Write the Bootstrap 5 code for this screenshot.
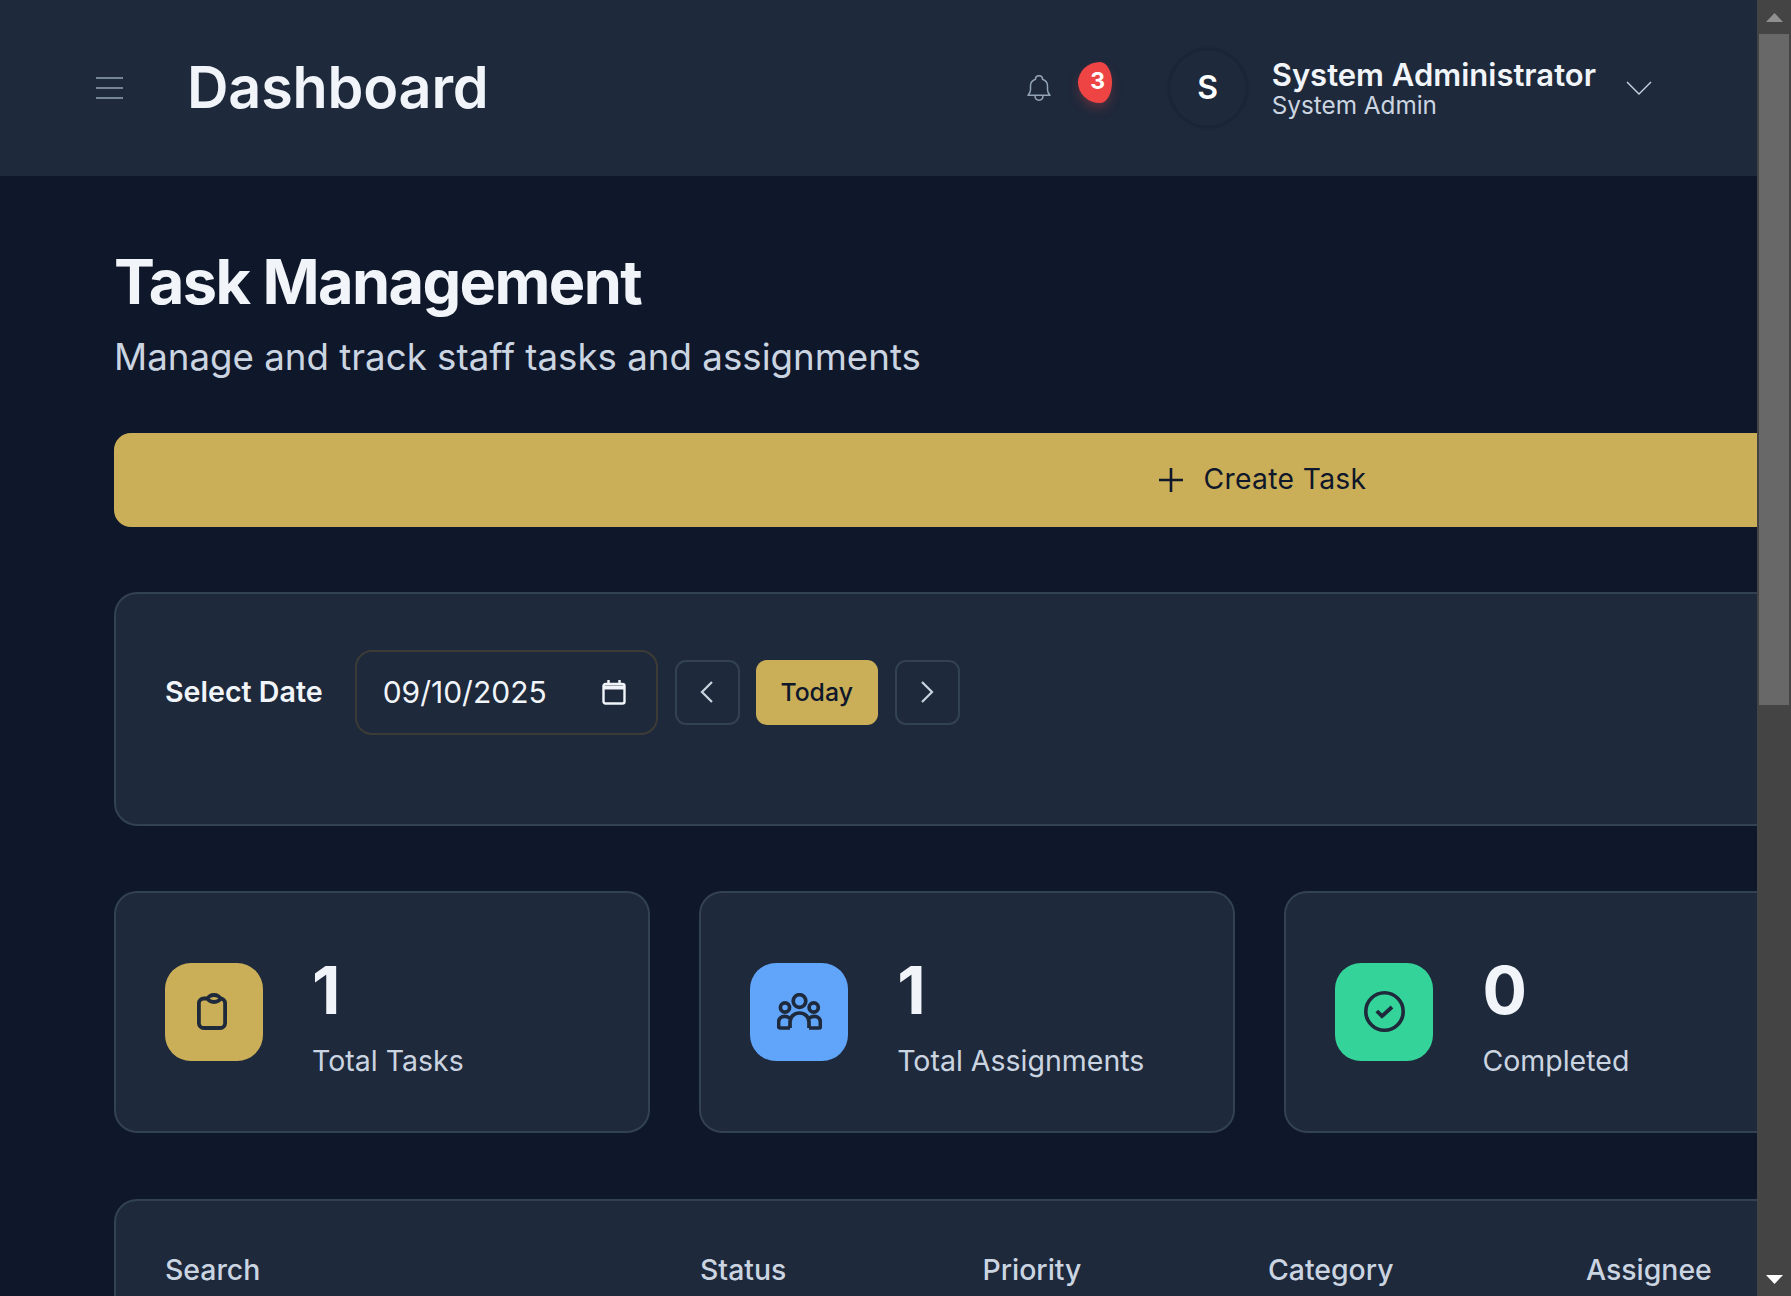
<!DOCTYPE html>
<html lang="en">
<head>
  <meta charset="UTF-8">
  <meta name="viewport" content="width=device-width, initial-scale=1.0">
  <title>Task Management</title>
  <link href="https://cdn.jsdelivr.net/npm/bootstrap@5.3.3/dist/css/bootstrap.min.css" rel="stylesheet">
  <style>
    html, body { height: 100%; overflow: hidden; }
    body { font-family: "Inter", "Liberation Sans", sans-serif; background: #0f172a; color: #f1f5f9; }
    .app-shell { height: 1296px; }
    .app-view { min-width: 0; overflow: hidden; }
    .top-bar { height: 176px; padding: 0 105px 0 96px; background: #1e293b; }
    .top-title { font-size: 57.500px; font-weight: 600; line-height: 1; color: #f1f5f9; margin: 0 0 0 64px; letter-spacing: -.2px; }
    .bell-box { width: 85px; height: 41px; margin-left: auto; margin-bottom: 12px; }
    .bell-svg { position: absolute; left: 0; top: 13px; }
    .bell-badge { position: absolute; left: 51px; top: 0; width: 34px; height: 41px; background: #ef4444; border-radius: 65% 35% 35% 65% / 50%; color: #fff; font-size: 23px; font-weight: 700; box-shadow: 0 6px 12px -2px rgba(239,68,68,.35); padding-left: 6px; padding-bottom: 2px; }
    .user-avatar { width: 78px; height: 78px; margin-left: 57px; background: #1e293b; box-shadow: 0 0 3px rgba(15,23,42,.55), inset 0 0 2px rgba(15,23,42,.4); font-size: 32px; font-weight: 600; color: #fff; flex: none; }
    .user-text { margin-left: 25px; margin-bottom: 1px; }
    .user-name { font-size: 31px; font-weight: 600; line-height: 35px; color: #f1f5f9; }
    .user-role { font-size: 24.300px; line-height: 27px; color: #cbd5e1; }
    .user-caret { margin-left: 30px; }
    .page-body { width: 2522px; padding: 70px 114px 0; }
    .page-title { font-size: 61.300px; font-weight: 700; line-height: 1.2; letter-spacing: -1.6px; color: #f1f5f9; margin: 0; }
    .page-sub { font-size: 36.700px; line-height: 1.2; color: #cbd5e1; margin: 15px 0 0; }
    .btn-create { height: 94px; margin-top: 54px; padding-left: 14px; padding-right: 12px; background: #cbaf58; border: 0; border-radius: 17px; color: #0f172a; font-size: 28.300px; font-weight: 400; letter-spacing: .3px; }
    .btn-create:hover { background: #cbaf58; color: #0f172a; }
    .panel-card { background: #1e293b; border: 2px solid #334155; border-radius: 23px; }
    .date-card { height: 234px; margin-top: 65px; padding: 56px 49px; }
    .date-label { font-size: 28.600px; font-weight: 600; color: #f1f5f9; margin-right: 32px; }
    .date-field { width: 303px; height: 85px; padding: 0 30px 0 26px; border: 2px solid #3c3b36; border-radius: 17px; background: transparent; font-size: 30px; color: #f1f5f9; margin-right: 17px; }
    .btn-step { width: 65px; height: 65px; padding: 0; border: 2px solid #334155; border-radius: 11px; background: transparent; }
    .btn-today { width: 122px; height: 65px; padding: 1px 0 0; margin: 0 17px 0 16px; border: 0; border-radius: 11px; background: #cbaf58; color: #0f172a; font-size: 24.800px; font-weight: 500; }
    .stat-grid { display: grid; grid-template-columns: repeat(4, 536.200px); gap: 49px; margin-top: 65px; }
    .stat-card { height: 242px; padding: 0 49px; flex-direction: row; align-items: center; }
    .stat-icon { width: 98px; height: 98px; border-radius: 26px; flex: none; margin-right: 49px; }
    .stat-text { padding-top: 6px; }
    .stat-num { font-size: 66px; font-weight: 700; line-height: 1.2; color: #f1f5f9; }
    .stat-label { font-size: 28.500px; line-height: 1.2; color: #cbd5e1; margin-top: 14px; }
    .bg-gold { background: #cbaf58; }
    .bg-sky { background: #60a5fa; }
    .bg-mint { background: #34d399; }
    .clip-svg { margin-right: 4px; }
    .filter-card { height: 300px; margin-top: 66px; padding: 52px 49px; }
    .filter-label { font-size: 28.400px; font-weight: 500; line-height: 1.2; color: #cbd5e1; }
    .filter-search { width: 535px; }
    .filter-status { width: 282.500px; }
    .filter-priority { width: 285.500px; }
    .filter-category { width: 318px; }
    .fake-scroll { width: 34px; background: #444; flex: none; }
    .scroll-btn { height: 34px; }
    .scroll-thumb { height: 671px; margin-left: 2px; width: 30px; background: #686868; }
  </style>
</head>
<body>
  <div class="app-shell d-flex">
    <div class="app-view flex-grow-1">

      <!-- Top bar -->
      <header class="top-bar d-flex align-items-center">
        <svg width="27" height="22" viewBox="0 0 27 22" fill="none" stroke="#94a3b8" stroke-width="1.5">
          <path d="M0 1h27M0 11h27M0 21h27"/>
        </svg>
        <h1 class="top-title">Dashboard</h1>

        <div class="bell-box position-relative">
          <svg class="bell-svg" width="24" height="26" viewBox="0 0 24 26" fill="none" stroke="#94a3b8" stroke-width="1.5" stroke-linejoin="round">
            <path d="M1 20.200h22c-1.500-1.500-2.500-3-2.500-5.500v-4c0-3-2-5.500-5-6.500 0-2-1-3.500-3.500-3.500S8.500 2.200 8.500 4.200c-3 1-5 3.500-5 6.500v4c0 2.500-1 4-2.500 5.500z"/>
            <path d="M8 20.500c0 3 1.800 4.700 4 4.700s4-1.700 4-4.700"/>
          </svg>
          <span class="bell-badge d-flex align-items-center justify-content-center">3</span>
        </div>

        <div class="user-avatar rounded-circle d-flex align-items-center justify-content-center">S</div>
        <div class="user-text">
          <div class="user-name">System Administrator</div>
          <div class="user-role">System Admin</div>
        </div>
        <svg class="user-caret" width="26" height="14" viewBox="0 0 26 14" fill="none" stroke="#cbd5e1" stroke-width="1.4">
          <path d="M1 1l12 12L25 1"/>
        </svg>
      </header>

      <main class="page-body">
        <h2 class="page-title">Task Management</h2>
        <p class="page-sub">Manage and track staff tasks and assignments</p>

        <button type="button" class="btn btn-create w-100 d-flex align-items-center justify-content-center gap-3">
          <svg width="26" height="26" viewBox="0 0 26 26" fill="none" stroke="#0f172a" stroke-width="2.600">
            <path d="M13 1v24M1 13h24"/>
          </svg>
          <span class="ms-1">Create Task</span>
        </button>

        <!-- Date picker -->
        <div class="card panel-card date-card">
          <div class="d-flex align-items-center">
            <span class="date-label">Select Date</span>
            <div class="date-field d-flex align-items-center justify-content-between">
              <span>09/10/2025</span>
              <svg width="24" height="25" viewBox="0 0 24 25" fill="none" stroke="#f1f5f9" stroke-width="2.400">
                <rect x="1.500" y="4" width="21" height="19.500" rx="2"/>
                <path d="M1.500 7.500h21" stroke-width="4"/>
                <path d="M6.500 0v4M17.500 0v4"/>
              </svg>
            </div>
            <button type="button" class="btn btn-step d-flex align-items-center justify-content-center">
              <svg width="14" height="22" viewBox="0 0 14 22" fill="none" stroke="#cbd5e1" stroke-width="2.200"><path d="M12 1L2 11l10 10"/></svg>
            </button>
            <button type="button" class="btn btn-today">Today</button>
            <button type="button" class="btn btn-step d-flex align-items-center justify-content-center">
              <svg width="14" height="22" viewBox="0 0 14 22" fill="none" stroke="#cbd5e1" stroke-width="2.200"><path d="M2 1l10 10L2 21"/></svg>
            </button>
          </div>
        </div>

        <!-- Stats -->
        <div class="stat-grid">
          <div class="card panel-card stat-card">
            <div class="stat-icon bg-gold d-flex align-items-center justify-content-center">
              <svg class="clip-svg" width="30" height="37" viewBox="0 0 30 37" fill="none" stroke="#1e293b" stroke-width="3.800">
                <rect x="1.900" y="5.500" width="26.200" height="29.500" rx="5"/>
                <ellipse cx="17" cy="5.500" rx="6" ry="3.500" fill="#cbaf58"/>
              </svg>
            </div>
            <div class="stat-text">
              <div class="stat-num">1</div>
              <div class="stat-label">Total Tasks</div>
            </div>
          </div>
          <div class="card panel-card stat-card">
            <div class="stat-icon bg-sky d-flex align-items-center justify-content-center">
              <svg width="45" height="37" viewBox="0 0 45 37" fill="none" stroke="#1e293b" stroke-width="3.700">
                <circle cx="22.500" cy="8" r="6.300"/>
                <circle cx="8" cy="14.500" r="4.600"/>
                <circle cx="36.700" cy="14.500" r="4.600"/>
                <path d="M13 35v-6c0-5 4-9 9.500-9s9.500 4 9.500 9v6"/>
                <path d="M13 35H3.300c-1 0-1.700-.8-1.700-1.700v-4c0-3.500 2.500-6 6-6 2 0 3.500.6 5 1.800"/>
                <path d="M32 35h9.700c1 0 1.700-.8 1.700-1.700v-4c0-3.500-2.500-6-6-6-2 0-3.500.6-5 1.800"/>
              </svg>
            </div>
            <div class="stat-text">
              <div class="stat-num">1</div>
              <div class="stat-label">Total Assignments</div>
            </div>
          </div>
          <div class="card panel-card stat-card">
            <div class="stat-icon bg-mint d-flex align-items-center justify-content-center">
              <svg width="41" height="41" viewBox="0 0 41 41" fill="none" stroke="#1e293b" stroke-width="3.600">
                <circle cx="20.500" cy="20.500" r="18.700"/>
                <path d="M12.800 20l5.200 5.200 10-9.200" stroke-width="3.800"/>
              </svg>
            </div>
            <div class="stat-text">
              <div class="stat-num">0</div>
              <div class="stat-label">Completed</div>
            </div>
          </div>
        </div>

        <!-- Filters -->
        <div class="card panel-card filter-card">
          <div class="d-flex">
            <div class="filter-label filter-search">Search</div>
            <div class="filter-label filter-status">Status</div>
            <div class="filter-label filter-priority">Priority</div>
            <div class="filter-label filter-category">Category</div>
            <div class="filter-label">Assignee</div>
          </div>
        </div>
      </main>
    </div>

    <!-- Window scrollbar -->
    <div class="fake-scroll d-flex flex-column">
      <div class="scroll-btn d-flex align-items-center justify-content-center">
        <svg width="17" height="9" viewBox="0 0 17 9"><path d="M8.500 0L17 9H0z" fill="#8f8f8f"/></svg>
      </div>
      <div class="scroll-thumb"></div>
      <div class="scroll-btn d-flex align-items-center justify-content-center mt-auto">
        <svg width="17" height="9" viewBox="0 0 17 9"><path d="M0 0h17L8.500 9z" fill="#fff"/></svg>
      </div>
    </div>
  </div>

  <script src="https://cdn.jsdelivr.net/npm/bootstrap@5.3.3/dist/js/bootstrap.bundle.min.js"></script>
</body>
</html>
